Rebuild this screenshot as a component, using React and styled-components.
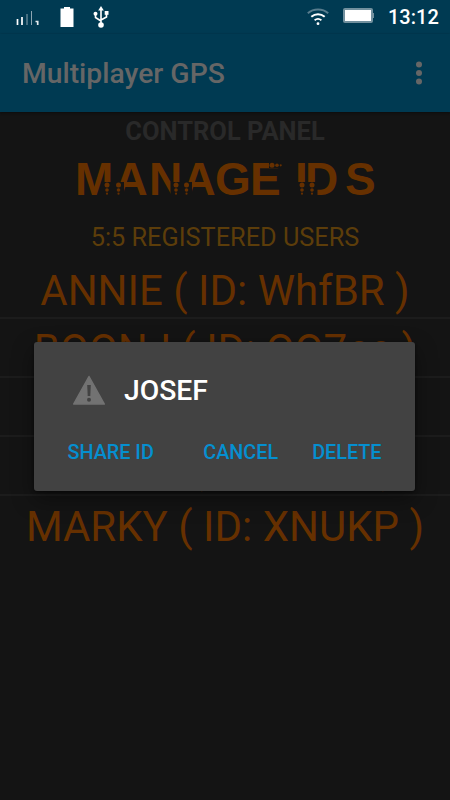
import React from "react";
import styled, { createGlobalStyle } from "styled-components";

const GlobalStyle = createGlobalStyle`
  body {
    margin: 0;
    background: #141414;
    font-family: Roboto, "Liberation Sans", sans-serif;
  }
`;

const Screen = styled.div`
  position: relative;
  width: 450px;
  height: 800px;
  overflow: hidden;
  background: #141414;
`;

const StatusBar = styled.div`
  display: flex;
  align-items: center;
  justify-content: space-between;
  box-sizing: border-box;
  height: 34px;
  padding: 0 11px 0 15px;
  background: #003a52;
`;

const StatusGroup = styled.div`
  display: flex;
  align-items: center;
  gap: ${(props) => props.$gap};
`;

const Clock = styled.span`
  width: 51px;
  font-size: 20px;
  font-weight: 500;
  line-height: 35px;
  color: #fff;
  white-space: nowrap;
`;

const AppBar = styled.header`
  display: flex;
  align-items: center;
  justify-content: space-between;
  box-sizing: border-box;
  height: 78px;
  padding: 0 28px 0 22px;
  background: #003a52;
  box-shadow: 0 1px 2px #0d0d0d;
`;

const AppTitle = styled.h1`
  margin: 0;
  padding-top: 2px;
  font-size: 28.3px;
  font-weight: 500;
  line-height: 76px;
  color: #666;
`;

const Content = styled.main`
  display: flex;
  flex-direction: column;
  align-items: center;
`;

const PanelLabel = styled.div`
  height: 38px;
  font-size: 25.5px;
  font-weight: 700;
  line-height: 38px;
  color: #292929;
`;

const Logo = styled.svg`
  display: block;
  margin-bottom: 19px;
  overflow: visible;
  font-family: "Liberation Sans", sans-serif;
  font-size: 46px;
  font-weight: 700;
`;

const UserCount = styled.div`
  height: 45px;
  font-size: 25.3px;
  line-height: 45px;
  color: #5c3d0a;
`;

const UserList = styled.ul`
  width: 100%;
  margin: 0;
  padding: 0;
  list-style: none;
`;

const UserRow = styled.li`
  box-sizing: border-box;
  height: 59px;
  border-bottom: ${(props) => (props.$last ? "none" : "2px solid #1c1c1c")};
  font-size: 42px;
  line-height: 62px;
  text-align: center;
  white-space: nowrap;
  color: #663000;
`;

const Dialog = styled.div`
  position: absolute;
  top: 342px;
  left: 34px;
  box-sizing: border-box;
  width: 381px;
  height: 149px;
  padding: 31px 33.5px 0 33.5px;
  border-radius: 3px;
  background: #424242;
  box-shadow: 0 8px 22px rgba(0, 0, 0, 0.4), 0 1px 3px rgba(0, 0, 0, 0.5);
`;

const DialogHeader = styled.div`
  display: flex;
  align-items: center;
  gap: 18px;
  height: 34px;
  padding-left: 4.5px;
`;

const DialogTitle = styled.h2`
  margin: 0;
  padding-top: 2px;
  font-size: 28.3px;
  font-weight: 500;
  line-height: 34px;
  color: #fff;
`;

const DialogActions = styled.div`
  display: flex;
  align-items: center;
  height: 34px;
  margin-top: 29px;
`;

const ActionButton = styled.button`
  margin: 0 ${(props) => props.$after || "0"} 0 0;
  padding: 0;
  border: none;
  background: none;
  font-family: inherit;
  font-size: 19.8px;
  font-weight: 500;
  line-height: 34px;
  white-space: nowrap;
  color: #058fd0;
`;

const users = [
  { name: "ANNIE", id: "WhfBR" },
  { name: "BOONJ", id: "OQ7cc" },
  { name: "DAVID", id: "R4kTe" },
  { name: "JOSEF", id: "Q3gx" },
  { name: "MARKY", id: "XNUKP" },
];

const SignalIcon = () => (
  <svg width="26" height="20" viewBox="0 0 26 20">
    <path d="M2.5 12v6M7 10v8" stroke="#fff" strokeWidth="1.7" />
    <path d="M12 7v11M16.5 4v14" stroke="#8da5b2" strokeWidth="1" />
    <path d="M20.5 14.5h2.2V18" stroke="#e3eaed" strokeWidth="1.7" fill="none" />
  </svg>
);

const BatteryIcon = () => (
  <svg width="14" height="20" viewBox="0 0 14 20">
    <path d="M4 0h6v1.5h3.5V20H.5V1.5H4z" fill="#fff" />
  </svg>
);

const UsbIcon = () => (
  <svg width="16" height="22" viewBox="0 0 16 22">
    <path
      d="M8 3v15M2.5 8v3.5L8 15M13.5 7v4L8 14"
      stroke="#fff"
      strokeWidth="1.6"
      fill="none"
    />
    <path d="M8 0l2.8 4.5H5.2z" fill="#fff" />
    <circle cx="2.5" cy="7.8" r="2" fill="#fff" />
    <rect x="11.7" y="5" width="3.8" height="3.8" fill="#fff" />
    <circle cx="8" cy="19" r="2.8" fill="#fff" />
  </svg>
);

const WifiIcon = () => (
  <svg width="22" height="18" viewBox="0 0 22 18" fill="none">
    <path d="M.8 5.2C6.5.3 15.5.3 21.2 5.2" stroke="#587c8d" strokeWidth="2" />
    <path d="M4.3 8.8c4-3.5 9.4-3.5 13.4 0" stroke="#fff" strokeWidth="2" />
    <path d="M7.6 12.2c2.2-1.8 4.6-1.8 6.8 0" stroke="#fff" strokeWidth="1.8" />
    <circle cx="11" cy="15.7" r="1.4" fill="#fff" />
  </svg>
);

const PowerIcon = () => (
  <svg width="31" height="18" viewBox="0 0 31 18">
    <rect x="0" y="0" width="30" height="15" rx="2" fill="#72909e" />
    <rect x="30" y="5" width="1" height="5" fill="#72909e" />
    <rect x="2" y="2" width="26" height="11" fill="#fff" />
  </svg>
);

const MenuIcon = () => (
  <svg width="6" height="24" viewBox="0 0 6 24" fill="#666">
    <circle cx="3" cy="3.5" r="3" />
    <circle cx="3" cy="12" r="3" />
    <circle cx="3" cy="20.5" r="3" />
  </svg>
);

const WarningIcon = () => (
  <svg width="34" height="30" viewBox="0 0 34 30">
    <path
      d="M17 1.5L32.3 29H1.7z"
      fill="#727272"
      stroke="#727272"
      strokeWidth="1.5"
      strokeLinejoin="round"
    />
    <path d="M15.2 10h3.6l-.5 11h-2.6z" fill="#424242" />
    <circle cx="17" cy="24.7" r="2" fill="#424242" />
  </svg>
);

// Stems that break up into a trail of shrinking dots
const stems = [33, 44.5, 102, 112.5, 228, 238];

const ManageLogo = () => (
  <Logo width="302" height="46" viewBox="0 0 302 46" fill="#663000">
    <text x="1 40.5 75 108.5 141 176 208 221 231 271" y="44.5">
      MANAGE IDS
    </text>
    {stems.map((x) => (
      <g key={x}>
        <rect x={x - 5.5} y="32" width="11" height="14" fill="#141414" />
        <circle cx={x} cy="35" r="2.5" />
        <circle cx={x} cy="40" r="1.8" />
        <circle cx={x} cy="43.7" r="1.1" />
      </g>
    ))}
    <rect x="195" y="11" width="12" height="7" fill="#141414" />
    <circle cx="198" cy="15.3" r="2.5" />
    <circle cx="203" cy="15.3" r="1.8" />
    <circle cx="206.7" cy="15.3" r="1.1" />
  </Logo>
);

const App = () => (
  <>
    <GlobalStyle />
    <Screen>
      <StatusBar>
        <StatusGroup $gap="19px">
          <SignalIcon />
          <BatteryIcon />
          <UsbIcon />
        </StatusGroup>
        <StatusGroup $gap="14px">
          <WifiIcon />
          <PowerIcon />
          <Clock>13:12</Clock>
        </StatusGroup>
      </StatusBar>
      <AppBar>
        <AppTitle>Multiplayer GPS</AppTitle>
        <MenuIcon />
      </AppBar>
      <Content>
        <PanelLabel>CONTROL PANEL</PanelLabel>
        <ManageLogo />
        <UserCount>5:5 REGISTERED USERS</UserCount>
        <UserList>
          {users.map((user, i) => (
            <UserRow key={user.name} $last={i === users.length - 1}>
              {user.name} ( ID: {user.id} )
            </UserRow>
          ))}
        </UserList>
      </Content>
      <Dialog role="dialog">
        <DialogHeader>
          <WarningIcon />
          <DialogTitle>JOSEF</DialogTitle>
        </DialogHeader>
        <DialogActions>
          <ActionButton $after="auto">SHARE ID</ActionButton>
          <ActionButton $after="34px">CANCEL</ActionButton>
          <ActionButton>DELETE</ActionButton>
        </DialogActions>
      </Dialog>
    </Screen>
  </>
);

export default App;
